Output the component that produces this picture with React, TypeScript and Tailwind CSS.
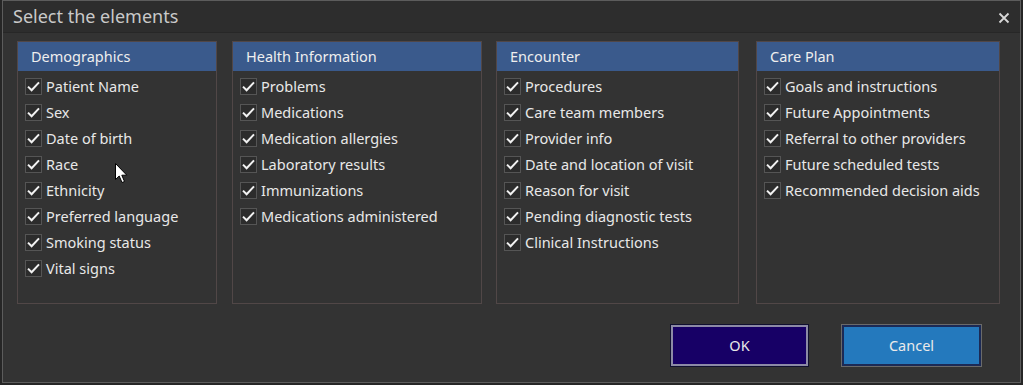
import React from "react";

const panels: { title: string; width: number; ml: string; items: string[] }[] = [
  {
    title: "Demographics",
    width: 200,
    ml: "ml-0",
    items: [
      "Patient Name",
      "Sex",
      "Date of birth",
      "Race",
      "Ethnicity",
      "Preferred language",
      "Smoking status",
      "Vital signs",
    ],
  },
  {
    title: "Health Information",
    width: 250,
    ml: "ml-[15px]",
    items: [
      "Problems",
      "Medications",
      "Medication allergies",
      "Laboratory results",
      "Immunizations",
      "Medications administered",
    ],
  },
  {
    title: "Encounter",
    width: 243,
    ml: "ml-[14px]",
    items: [
      "Procedures",
      "Care team members",
      "Provider info",
      "Date and location of visit",
      "Reason for visit",
      "Pending diagnostic tests",
      "Clinical Instructions",
    ],
  },
  {
    title: "Care Plan",
    width: 244,
    ml: "ml-[17px]",
    items: [
      "Goals and instructions",
      "Future Appointments",
      "Referral to other providers",
      "Future scheduled tests",
      "Recommended decision aids",
    ],
  },
];

function Check() {
  return (
    <span className="flex h-[17px] w-[17px] shrink-0 items-center justify-center border border-[#555555] bg-[#2c2c2c]">
      <svg width="15" height="15" viewBox="0 0 15 15">
        <path d="M2 7.6 L5.6 11.2 L13 3.4" fill="none" stroke="#f2f2f2" strokeWidth="2" />
      </svg>
    </span>
  );
}

export default function App() {
  return (
    <div
      className="relative h-[385px] w-[1023px] overflow-hidden bg-[#262626]"
      style={{ fontFamily: '"Noto Sans", "Open Sans", sans-serif' }}
    >
      <div className="ml-[2px] flex h-[383px] w-[1019px] flex-col border border-[#5c5c5c] bg-[#333333]">
        <div className="flex h-[32px] shrink-0 items-center justify-between border-b border-[#272727] bg-[#2d2d2d] pl-[10px] pr-[10px]">
          <span className="text-[18px] text-[#c9c9c9]">Select the elements</span>
          <svg width="12" height="12" viewBox="0 0 12 12" className="mt-[2px]">
            <path d="M1.5 1.5 L10.5 10.5 M10.5 1.5 L1.5 10.5" stroke="#d8d8d8" strokeWidth="1.8" />
          </svg>
        </div>
        <div className="flex pl-[14px] pt-[8px]">
          {panels.map((p) => (
            <div
              key={p.title}
              className={`${p.ml} h-[263px] shrink-0 border border-[#514747]`}
              style={{ width: p.width }}
            >
              <div className="flex h-[29px] items-center bg-[#3a5a8c] pl-[13px] pt-[1px] text-[14.5px] text-[#eeeeee]">
                {p.title}
              </div>
              <div className="pl-[7px] pt-[2px]">
                {p.items.map((it) => (
                  <div key={it} className="flex h-[26px] items-center gap-[4px]">
                    <Check />
                    <span className="pt-[1px] text-[14.5px] text-[#e8e8e8]">{it}</span>
                  </div>
                ))}
              </div>
            </div>
          ))}
        </div>
        <div className="flex justify-end pr-[39px] pt-[21px]">
          <button className="flex h-[41px] w-[137px] items-center justify-center border-2 border-[#8c8aa6] bg-[#170066] text-[14.5px] text-[#e8e8e8] outline outline-1 outline-[#101030]">
            OK
          </button>
          <button className="ml-[34px] flex h-[41px] w-[139px] items-center justify-center border-2 border-[#1c2a55] bg-[#2479bd] text-[14.5px] text-[#eaeaea] outline outline-1 outline-[#6a6a6a]">
            Cancel
          </button>
        </div>
      </div>
      <svg
        className="absolute left-[115px] top-[163px]"
        width="14"
        height="22"
        viewBox="0 0 14 22"
      >
        <path
          d="M0.5 0.5 L0.5 16.5 L4.2 13 L7 19.5 L9.5 18.5 L6.8 12.2 L11.8 12.2 Z"
          fill="#ffffff"
          stroke="#000000"
          strokeWidth="1"
        />
      </svg>
    </div>
  );
}
